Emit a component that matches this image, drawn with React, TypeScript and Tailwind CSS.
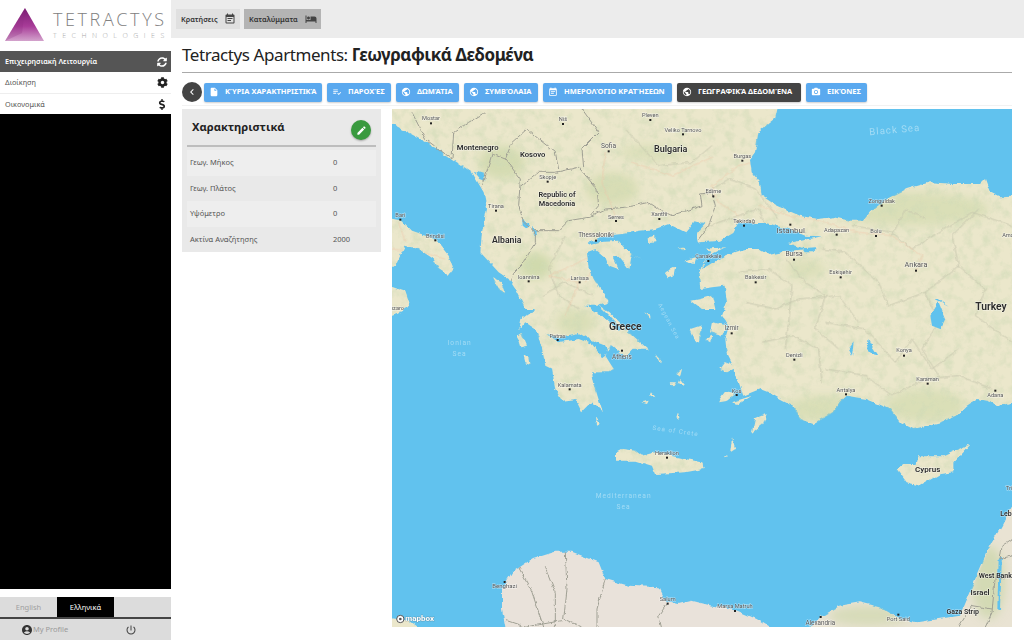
import React from 'react';
import { FaCog, FaDollarSign, FaSyncAlt } from 'react-icons/fa';
import { MdAccountCircle, MdCameraAlt, MdChevronLeft, MdEdit, MdEventNote, MdHotel, MdInsertDriveFile, MdPlaylistAddCheck, MdPowerSettingsNew, MdPublic } from 'react-icons/md';

type IconType = React.ComponentType<{ className?: string }>;

const tabs: { label: string; icon: IconType; bg: string; width: string }[] = [
    { label: 'Κρατήσεις', icon: MdEventNote, bg: 'bg-[#e0e0e0]', width: 'w-[64px]' },
    { label: 'Καταλύμματα', icon: MdHotel, bg: 'bg-[#b4b4b4]', width: 'w-[77px]' },
];

const navButtons: { label: string; icon: IconType; width: string; active?: boolean }[] = [
    { label: 'ΚΎΡΙΑ ΧΑΡΑΚΤΗΡΙΣΤΙΚΆ', icon: MdInsertDriveFile, width: 'w-[118px]' },
    { label: 'ΠΑΡΟΧΈΣ', icon: MdPlaylistAddCheck, width: 'w-[64px]' },
    { label: 'ΔΩΜΆΤΙΑ', icon: MdPublic, width: 'w-[63px]' },
    { label: 'ΣΥΜΒΌΛΑΙΑ', icon: MdPublic, width: 'w-[74px]' },
    { label: 'ΗΜΕΡΟΛΌΓΙΟ ΚΡΑΤΉΣΕΩΝ', icon: MdEventNote, width: 'w-[129px]' },
    { label: 'ΓΕΩΓΡΑΦΙΚΆ ΔΕΔΟΜΈΝΑ', icon: MdPublic, width: 'w-[124px]', active: true },
    { label: 'ΕΙΚΌΝΕΣ', icon: MdCameraAlt, width: 'w-[61px]' },
];

const attributes = [
    { name: 'Γεωγ. Μήκος', value: '0', bg: 'bg-[#eeeeee]' },
    { name: 'Γεωγ. Πλάτος', value: '0', bg: 'bg-[#e9e9e9]' },
    { name: 'Υψόμετρο', value: '0', bg: 'bg-[#eeeeee]' },
    { name: 'Ακτίνα Αναζήτησης', value: '2000', bg: 'bg-[#e9e9e9]' },
];

// map shapes, in units of 1/3 px from the map's top left corner
const mainland = '-20,-20 1161,-20 1149,30 1099,70 1089,130 1074,150 1079,190 1104,220 1109,260 1154,290 1224,320 1274,330 1324,325 1374,335 1414,335 1434,310 1484,270 1544,240 1614,220 1684,225 1764,225 1779,210 1794,250 1824,265 1880,262 1880,875 1824,890 1784,875 1754,870 1724,890 1694,920 1644,940 1564,960 1524,940 1494,900 1424,870 1364,860 1344,880 1324,910 1264,945 1224,930 1204,890 1164,870 1129,850 1104,840 1054,860 1030,790 1005,740 1000,690 1012,650 990,620 1005,580 998,530 960,535 925,540 920,490 955,432 920,398 915,372 940,345 905,340 880,370 830,345 790,360 740,365 690,375 640,380 600,395 585,410 620,400 680,395 700,420 750,455 720,435 712,480 680,440 662,442 682,482 650,470 640,445 610,420 585,430 590,480 620,530 650,580 620,590 650,610 700,660 770,722 722,722 700,745 660,710 640,740 665,780 650,790 620,790 600,790 610,840 632,910 600,880 570,910 550,870 510,875 490,840 480,780 460,770 450,715 430,660 400,640 382,660 388,630 430,600 400,600 370,540 350,510 320,490 265,430 270,370 285,300 275,250 240,190 180,150 100,100 -20,35';

const africa = '345,1580 330,1500 330,1440 360,1390 420,1350 490,1328 540,1328 620,1360 640,1410 710,1430 800,1435 820,1475 860,1485 900,1475 960,1490 1024,1500 1094,1530 1174,1580';
const delta = '1234,1580 1284,1525 1344,1490 1404,1480 1464,1495 1524,1530 1574,1540 1704,1520 1764,1380 1794,1310 1829,1250 1880,1150 1880,1580';

const islands = [
    '-20,325 30,335 60,365 130,390 170,440 185,480 170,500 140,480 125,450 80,420 40,410 10,470 -20,480',
    '-20,525 40,545 55,590 20,610 -20,625',
    '-20,1525 50,1535 110,1580 -20,1580',
    '1514,1080 1534,1065 1574,1065 1579,1042 1654,1042 1734,1005 1684,1060 1684,1090 1644,1095 1584,1130 1544,1120',
    '672,1030 690,1020 730,1025 750,1040 790,1030 880,1050 930,1060 935,1080 880,1090 790,1095 780,1070 730,1055 672,1055',
    '1079,975 1089,930 1124,915 1114,945',
    '1015,1030 1020,985 1030,1020',
    '995,1045 1005,1035 1008,1042',
    '924,1070 932,1060 932,1080',
    '300,505 325,515 340,555 320,540',
    '375,680 388,672 405,710 385,715',
    '395,740 412,745 415,765 400,760',
    '770,385 790,380 790,400 772,402',
    '860,415 880,418 875,425',
    '880,455 910,445 905,462',
    '820,490 850,475 845,500 830,505',
    '895,660 925,650 925,700 910,700',
    '940,690 960,680 958,700',
    '925,570 960,560 970,600 930,600 898,575',
    '1010,650 960,640 954,670 990,680',
    '760,610 775,620 775,630',
    '790,735 810,760 800,755',
    '1000,760 1035,775 1005,790 985,780',
    '1000,850 1030,855 1005,875 978,880',
    '1050,870 1080,860 1040,885 1020,880',
    '850,790 870,780 865,800',
    '880,830 865,810 860,825',
    '830,820 855,820 845,835',
    '745,880 770,875 765,885',
    '780,850 790,865 775,860',
    '855,910 860,930 850,925',
    '612,925 625,945 615,950',
];

const water = [
    '924,400 984,395 1024,372 1040,342 1124,342 1190,360 1240,380 1290,382 1240,392 1190,402 1240,420 1170,430 1130,438 1100,420 1060,420 1030,428 1000,440 960,462 930,480 950,440 1000,415 930,420',
    '1230,418 1270,415 1268,430 1238,430',
    '460,672 500,685 560,672 590,690 640,710 650,730 630,745 600,705 560,690 500,700',
    '580,590 620,590 640,610 690,660 680,665 630,620',
    '245,185 275,195 280,215 265,210',
    '390,330 410,345 405,360 392,350',
    '420,350 435,370 430,385 422,370',
    '1615,620 1640,580 1660,630 1645,660 1620,650',
    '1630,570 1670,590 1640,570',
    '1430,690 1440,710 1460,740 1445,740 1425,720',
    '1370,720 1385,700 1380,740',
    '1820,1350 1830,1340 1824,1500 1816,1500',
];

const greens = [
    { cx: 330, cy: 160, rx: 70, ry: 50, o: 0.6 },
    { cx: 430, cy: 470, rx: 50, ry: 40, o: 0.7 },
    { cx: 660, cy: 240, rx: 80, ry: 50, o: 0.5 },
    { cx: 780, cy: 130, rx: 100, ry: 24, o: 0.4 },
    { cx: 550, cy: 640, rx: 60, ry: 40, o: 0.45 },
    { cx: 1560, cy: 300, rx: 230, ry: 50, o: 0.45 },
    { cx: 1240, cy: 480, rx: 60, ry: 30, o: 0.4 },
    { cx: 1300, cy: 900, rx: 120, ry: 40, o: 0.45 },
    { cx: 1600, cy: 890, rx: 120, ry: 50, o: 0.45 },
    { cx: 1430, cy: 1520, rx: 120, ry: 30, o: 0.5 },
    { cx: 1790, cy: 1420, rx: 50, ry: 110, o: 0.6 },
    { cx: 430, cy: 1370, rx: 70, ry: 25, o: 0.5 },
];

const borders = [
    '60,10 100,90 180,150 185,70 230,40 282,8',
    '270,235 300,135 340,150 385,210 380,290 395,340 430,370 430,400 395,460 365,490 355,515',
    '340,150 360,100 405,60 440,90 490,130 500,180',
    '385,235 440,190 490,190 560,175 615,240 620,290 590,325 530,335 500,365 430,365',
    '570,0 620,70 570,120 575,175',
    '590,325 640,300 700,295 770,280 800,300 840,320 930,290 925,255 960,250 970,290 950,350 920,390',
    '1840,1410 1810,1400 1800,1510 1780,1554',
    '1860,1290 1830,1310 1824,1350 1860,1340',
    '1700,1554 1740,1490 1800,1500',
    '380,1375 420,1450 455,1554',
    '460,1375 490,1450 490,1554',
    '520,1330 525,1440 515,1530 570,1554',
    '640,1410 615,1500 615,1554',
    '345,1535 400,1554 510,1535',
    '825,1485 800,1520 808,1554',
];

const provinces = [
    '930,260 1010,210 1090,240 1130,290 1160,330',
    '950,350 1040,320 1100,300 1130,380 1240,370',
    '1180,450 1240,520 1300,560 1270,660 1340,720',
    '1290,420 1360,430 1460,520 1490,590 1600,550 1700,470 1780,540 1750,620 1860,700',
    '1380,350 1500,370 1560,420 1640,370 1740,310 1860,350',
    '1040,490 1130,480 1200,530 1190,640 1180,720',
    '1300,640 1420,660 1510,760 1560,690 1620,780 1700,720',
    '1300,780 1420,800 1500,860 1600,810 1700,800 1800,840',
    '1060,580 1150,600 1220,570 1340,560 1400,640',
    '1600,550 1640,640 1590,720 1640,800',
    '1700,470 1680,380 1760,300',
    '1500,380 1540,300 1600,330',
    '1110,700 1200,680 1280,720 1290,820',
    '520,380 470,480 500,560 560,600',
    '450,560 520,520 600,560',
    '700,60 800,170 900,160 960,110',
];

const coastRoads = [
    '0,420 90,430 160,450',
    '1130,150 1040,170 960,230 980,280 1040,320',
    '1100,290 1190,320 1260,330 1400,370 1500,380 1590,440 1570,490',
    '640,130 630,220 670,320',
    '580,520 620,430 540,470 470,500 560,520 520,620',
    '720,160 840,200 960,145',
    '20,340 40,400',
    '450,1540 720,1440',
];

const labels: { t: string; x: number; y: number; s?: number; b?: boolean; sea?: boolean; r?: number }[] = [
    { t: 'Mostar', x: 117, y: 34 }, { t: 'Niš', x: 513, y: 37 }, { t: 'Pleven', x: 775, y: 25 },
    { t: 'Veliko Tarnovo', x: 873, y: 69 }, { t: 'Montenegro', x: 257, y: 123, s: 23, b: true },
    { t: 'Kosovo', x: 422, y: 143, s: 23, b: true }, { t: 'Sofia', x: 650, y: 118, s: 20 },
    { t: 'Bulgaria', x: 836, y: 129, s: 27, b: true }, { t: 'Skopje', x: 467, y: 210 },
    { t: 'Republic of', x: 495, y: 265, s: 22, b: true }, { t: 'Macedonia', x: 495, y: 292, s: 22, b: true },
    { t: 'Tirana', x: 312, y: 296 }, { t: 'Serres', x: 672, y: 329 }, { t: 'Xanthi', x: 802, y: 322 },
    { t: 'Bari', x: 25, y: 323 }, { t: 'Brindisi', x: 130, y: 386 }, { t: 'Albania', x: 344, y: 402, s: 26, b: true },
    { t: 'Thessaloniki', x: 612, y: 384, s: 19 }, { t: 'Ioannina', x: 410, y: 510 }, { t: 'Larissa', x: 563, y: 513 },
    { t: 'Greece', x: 700, y: 662, s: 31, b: true }, { t: 'Patras', x: 497, y: 686 }, { t: 'Athens', x: 690, y: 749, s: 19 },
    { t: 'Ionian', x: 203, y: 709, s: 20, sea: true }, { t: 'Sea', x: 203, y: 741, s: 20, sea: true },
    { t: 'Aegean Sea', x: 826, y: 640, s: 17, sea: true, r: 62 }, { t: 'nzaro', x: 15, y: 603 },
    { t: 'Burgas', x: 1051, y: 146 }, { t: 'Black Sea', x: 1509, y: 72, s: 29, sea: true, r: -5 },
    { t: 'Edirne', x: 964, y: 252 }, { t: 'Tekirdağ', x: 1056, y: 342 }, { t: 'Istanbul', x: 1196, y: 372, s: 24 },
    { t: 'Adapazarı', x: 1334, y: 369 }, { t: 'Bolu', x: 1452, y: 373 }, { t: 'Zonguldak', x: 1469, y: 281 },
    { t: 'Ama', x: 1848, y: 385 }, { t: 'Çanakkale', x: 949, y: 447 }, { t: 'Bursa', x: 1206, y: 442, s: 20 },
    { t: 'Balıkesir', x: 1091, y: 511 }, { t: 'Eskişehir', x: 1346, y: 496 }, { t: 'Ankara', x: 1572, y: 474, s: 22 },
    { t: 'Turkey', x: 1797, y: 604, s: 31, b: true }, { t: 'İzmir', x: 1019, y: 663, s: 19 }, { t: 'Konya', x: 1536, y: 729 },
    { t: 'Denizli', x: 1207, y: 743 },
    { t: 'Kalamata', x: 533, y: 833 }, { t: 'Sea of Crete', x: 850, y: 972, s: 19, sea: true, r: 8 },
    { t: 'Heraklion', x: 825, y: 1038 }, { t: 'Mediterranean', x: 695, y: 1166, s: 20, sea: true },
    { t: 'Sea', x: 695, y: 1199, s: 20, sea: true }, { t: 'Benghazi', x: 338, y: 1438, s: 18 }, { t: 'Salum', x: 827, y: 1476 },
    { t: 'Kos', x: 1034, y: 851 }, { t: 'Antalya', x: 1362, y: 849 }, { t: 'Karaman', x: 1607, y: 816 },
    { t: 'Adana', x: 1810, y: 864 }, { t: 'Cyprus', x: 1607, y: 1088, s: 24, b: true }, { t: 'Trip', x: 1856, y: 1142 },
    { t: 'Leb', x: 1842, y: 1220, s: 21, b: true }, { t: 'West Bank', x: 1810, y: 1406, s: 21, b: true },
    { t: 'Israel', x: 1764, y: 1458, s: 23, b: true }, { t: 'Gaza Strip', x: 1712, y: 1514, s: 21, b: true },
    { t: 'Marsa Matruh', x: 1029, y: 1497 }, { t: 'Alexandria', x: 1285, y: 1547, s: 19 }, { t: 'Port Said', x: 1519, y: 1536 },
];

const cities = [
    [117, 43], [513, 45], [775, 33], [873, 76], [650, 127], [467, 218], [312, 305], [672, 336], [802, 330], [25, 332],
    [130, 394], [612, 395], [410, 517], [563, 520], [497, 693], [690, 725], [1051, 155], [1056, 350], [1195, 347],
    [1334, 377], [1452, 381], [1469, 290], [964, 262], [949, 456], [1206, 452], [1091, 520], [1346, 505], [1572, 485],
    [1019, 673], [1536, 740], [1207, 752], [533, 841], [825, 1046], [338, 1419], [827, 1484], [1034, 858], [1362, 856],
    [1607, 824], [1810, 845], [1029, 1506], [1286, 1524], [1519, 1517],
];

const GeoMap: React.FC = () => (
    <svg viewBox="0 0 1860 1554" className="block w-[620px] h-[518px] bg-[#61c2ee]">
        <defs>
            <clipPath id="allLand">
                <polygon points={mainland} />
                <polygon points={delta} />
                {islands.map((p) => <polygon key={p} points={p} />)}
            </clipPath>
            <filter id="soft" x="-50%" y="-50%" width="200%" height="200%">
                <feGaussianBlur stdDeviation="14" />
            </filter>
            {/* wobbles the straight polygon edges so coasts read as coasts */}
            <filter id="coast" x="-2%" y="-2%" width="104%" height="104%">
                <feTurbulence type="fractalNoise" baseFrequency="0.045" numOctaves="3" seed="4" result="n" />
                <feDisplacementMap in="SourceGraphic" in2="n" scale="14" xChannelSelector="R" yChannelSelector="G" />
                <feGaussianBlur stdDeviation="1.6" />
            </filter>
            <filter id="wiggle" x="-5%" y="-5%" width="110%" height="110%">
                <feTurbulence type="fractalNoise" baseFrequency="0.06" numOctaves="2" seed="9" result="n" />
                <feDisplacementMap in="SourceGraphic" in2="n" scale="12" xChannelSelector="R" yChannelSelector="G" />
            </filter>
            <filter id="relief" x="0" y="0" width="100%" height="100%">
                <feTurbulence type="fractalNoise" baseFrequency="0.035" numOctaves="4" seed="12" />
                <feColorMatrix type="matrix" values="0 0 0 0 0.62  0 0 0 0 0.70  0 0 0 0 0.47  2.6 0 0 0 -1.15" />
            </filter>
        </defs>

        <g filter="url(#coast)">
            <polygon points={mainland} fill="#ebe7cb" />
            {islands.map((p) => <polygon key={p} points={p} fill="#ebe7cb" />)}
            <polygon points={africa} fill="#e9e2da" />
            <polygon points={delta} fill="#e9e3d3" />
        </g>

        <g clipPath="url(#allLand)">
            <g filter="url(#soft)">
                {greens.map((g) => <ellipse key={`${g.cx}-${g.cy}`} cx={g.cx} cy={g.cy} rx={g.rx} ry={g.ry} fill="#c5d4a0" opacity={g.o} />)}
            </g>
            <rect x="0" y="0" width="1860" height="1100" filter="url(#relief)" opacity="0.55" />
            <g filter="url(#wiggle)">
                {provinces.map((p) => <polyline key={p} points={p} fill="none" stroke="#c4c4ac" strokeWidth="2.5" />)}
                {coastRoads.map((p) => <polyline key={p} points={p} fill="none" stroke="#efc3a6" strokeWidth="2" opacity="0.8" />)}
            </g>
        </g>

        <g filter="url(#coast)">
            {water.map((p) => <polygon key={p} points={p} fill="#61c2ee" />)}
        </g>

        <g filter="url(#wiggle)">
            {borders.map((p) => <polyline key={p} points={p} fill="none" stroke="#a0a094" strokeWidth="3" />)}
        </g>

        {cities.map(([x, y]) => <rect key={`${x}-${y}`} x={x - 3} y={y - 3} width="6" height="6" fill="#222" />)}

        {labels.map((l) => (
            <text
                key={`${l.t}-${l.x}`}
                x={l.x}
                y={l.y}
                textAnchor="middle"
                fontSize={l.s ?? 17}
                fontWeight={l.b ? 600 : 400}
                letterSpacing={l.sea ? 3 : 0}
                fill={l.sea ? '#a3dcf5' : l.b ? '#2b2b2b' : '#555'}
                stroke={l.sea ? 'none' : '#ffffff'}
                strokeOpacity="0.55"
                strokeWidth="3"
                paintOrder="stroke"
                fontFamily="Roboto, sans-serif"
                transform={l.r ? `rotate(${l.r} ${l.x} ${l.y})` : undefined}
            >
                {l.t}
            </text>
        ))}

        <circle cx="25" cy="1530" r="11" fill="#fff" stroke="#555" strokeWidth="3" />
        <circle cx="25" cy="1530" r="4" fill="#555" />
        <text x="40" y="1537" fontSize="24" fontWeight="700" fill="#fff" stroke="#555" strokeOpacity="0.5" strokeWidth="2" paintOrder="stroke" fontFamily="Roboto, sans-serif">mapbox</text>
    </svg>
);

const Logo: React.FC = () => (
    <div className="h-[51px] flex items-start shrink-0">
        <svg viewBox="0 0 50 51" className="w-[50px] h-[51px] shrink-0">
            <defs>
                <linearGradient id="tri" x1="0" y1="0" x2="0" y2="1">
                    <stop offset="0" stopColor="#7a1c72" />
                    <stop offset="0.55" stopColor="#a83c98" />
                    <stop offset="1" stopColor="#d3a3cc" />
                </linearGradient>
            </defs>
            <polygon points="25,8 44,41 5,41" fill="url(#tri)" />
            <polygon points="25,8 5,41 22,33" fill="#8a2a80" opacity="0.25" />
        </svg>
        <div className="ml-[3px] pt-[9px] font-['Open_Sans',sans-serif] font-light text-[#808080]">
            <div className="text-[18px] leading-[20px] tracking-[2.6px]">TETRACTYS</div>
            <div className="text-[7px] leading-[10px] mt-[2px] tracking-[5.5px] text-[#a8a8a8]">TECHNOLOGIES</div>
        </div>
    </div>
);

const Sidebar: React.FC = () => (
    <aside className="w-[171px] h-full flex flex-col shrink-0">
        <Logo />
        <div className="h-[21px] bg-[#555555] text-white flex items-center justify-between pl-[5px] pr-[3px] text-[7.2px] font-semibold">
            Επιχειρησιακή Λειτουργία
            <FaSyncAlt className="w-[10px] h-[10px] mr-[1px]" />
        </div>
        <div className="h-[22px] flex items-center justify-between pl-[5px] pr-[3px] text-[7.3px] text-[#555] border-b border-[#eeeeee]">
            Διοίκηση
            <FaCog className="w-[11px] h-[11px] text-[#222]" />
        </div>
        <div className="h-[20px] flex items-center justify-between pl-[5px] pr-[4px] text-[7.3px] text-[#555]">
            Οικονομικά
            <FaDollarSign className="w-[10px] h-[11px] text-[#222]" />
        </div>
        <div className="flex-1 bg-black" />
        <div className="h-[8px]" />
        <div className="h-[20px] bg-[#dcdcdc] flex text-[7.5px] text-center leading-[20px]">
            <div className="w-[57px] text-[#a0a0a0]">English</div>
            <div className="w-[57px] bg-black text-white">Ελληνικά</div>
        </div>
        <div className="h-[2px] bg-[#444444]" />
        <div className="h-[21px] bg-[#dcdcdc] flex items-center text-[7.5px] text-[#9a9a9a] pl-[21px]">
            <MdAccountCircle className="w-[12px] h-[12px] text-[#333]" />
            My Profile
            <MdPowerSettingsNew className="w-[12px] h-[12px] ml-[57px] text-[#444]" />
        </div>
    </aside>
);

const TopBar: React.FC = () => (
    <div className="h-[38px] bg-[#ececec] flex items-start gap-[4px] pl-[5px] pt-[9px] shrink-0">
        {tabs.map(({ label, icon: Icon, bg, width }) => (
            <div key={label} className={`${width} ${bg} h-[20px] flex items-center justify-between pl-[5px] pr-[4px] text-[7.3px] font-semibold text-[#333]`}>
                {label}
                <Icon className="w-[12px] h-[12px] text-[#444]" />
            </div>
        ))}
    </div>
);

const NavRow: React.FC = () => (
    <div className="flex items-center gap-[5px] mt-[9px] h-[20px] shrink-0">
        <div className="w-[20px] h-[20px] rounded-full bg-[#444444] text-white flex items-center justify-center -mr-[3px]">
            <MdChevronLeft className="w-[12px] h-[12px]" />
        </div>
        {navButtons.map(({ label, icon: Icon, width, active }) => (
            <div
                key={label}
                className={`${width} h-[19px] rounded-[2px] flex items-center gap-[4px] pl-[5px] text-[7.5px] font-bold whitespace-nowrap text-white shadow-[0_1px_2px_rgba(0,0,0,0.2)] ${active ? 'bg-[#444444]' : 'bg-[#5aa9ef]'}`}
            >
                <Icon className="w-[10px] h-[10px] mr-[2px] shrink-0" />
                {label}
            </div>
        ))}
    </div>
);

const AttributesCard: React.FC = () => (
    <section className="w-[199px] h-[143px] bg-[#e9e9e9] px-[5px] shrink-0">
        <div className="h-[38px] flex items-start justify-between border-b-2 border-[#bdbdbd] pl-[5px] pr-[5px]">
            <h3 className="text-[11.2px] font-bold text-[#222] mt-[10px] leading-[16px]">Χαρακτηριστικά</h3>
            <div className="w-[20px] h-[20px] rounded-full bg-[#3a9a3f] text-white flex items-center justify-center mt-[11px] shadow-[0_1px_2px_rgba(0,0,0,0.3)]">
                <MdEdit className="w-[11px] h-[11px]" />
            </div>
        </div>
        <div className="mt-[3px]">
            {attributes.map((row) => (
                <div key={row.name} className={`h-[25.5px] flex items-center text-[7.5px] text-[#555] pl-[3px] ${row.bg}`}>
                    <span className="w-[143px]">{row.name}</span>
                    <span>{row.value}</span>
                </div>
            ))}
        </div>
    </section>
);

export default function App() {
    return (
        <div className="w-[1024px] h-[640px] flex bg-white overflow-hidden font-['Noto_Sans',sans-serif]">
            <Sidebar />
            <main className="flex-1 flex flex-col min-w-0">
                <TopBar />
                <div className="flex-1 flex flex-col pl-[11px] pr-[12px] min-h-0">
                    <h1 className="h-[35px] shrink-0 border-b border-[#aaaaaa] text-[17px] leading-[34px] tracking-[-0.42px] text-[#222] whitespace-nowrap">
                        Tetractys Apartments: <span className="font-bold">Γεωγραφικά Δεδομένα</span>
                    </h1>
                    <NavRow />
                    <div className="h-[4px] border-b border-[#f2f2f2] shrink-0" />
                    <div className="flex gap-[11px] mt-[3px]">
                        <AttributesCard />
                        <GeoMap />
                    </div>
                </div>
            </main>
        </div>
    );
}
